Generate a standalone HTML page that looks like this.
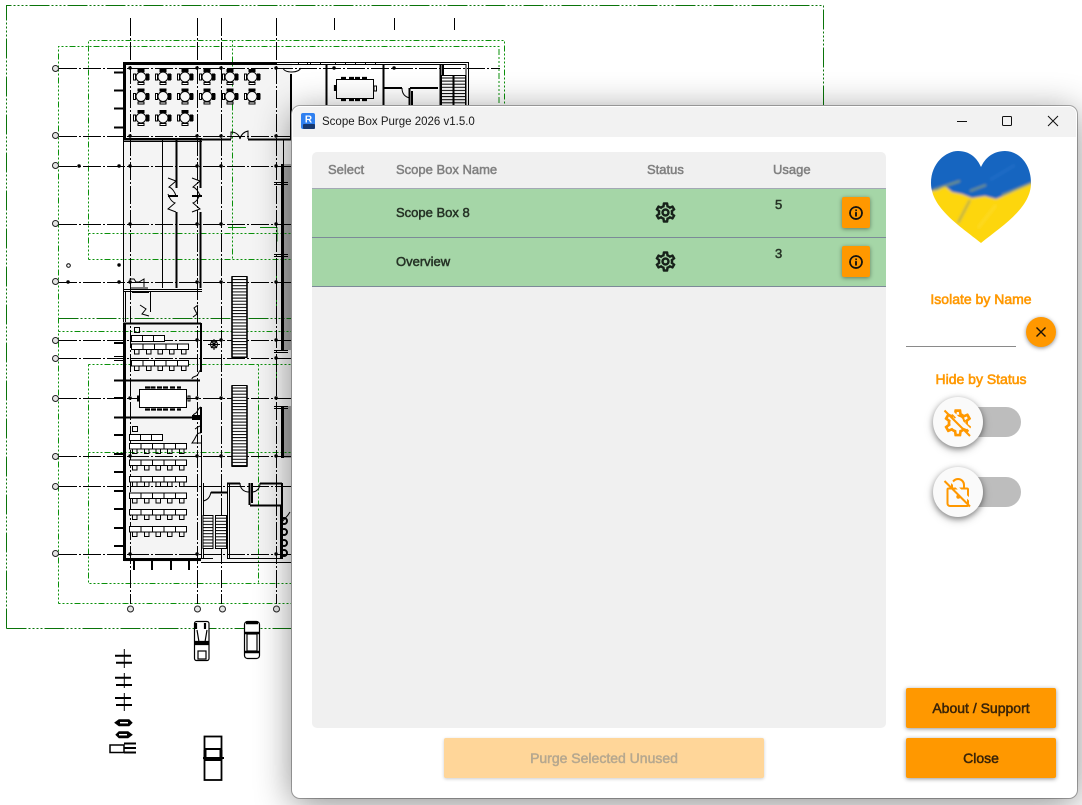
<!DOCTYPE html>
<html><head><meta charset="utf-8">
<style>
html,body{margin:0;padding:0;background:#fff}
body{width:1082px;height:805px;overflow:hidden;position:relative;font-family:"Liberation Sans",sans-serif}
.a{position:absolute;white-space:nowrap}
#cad{position:absolute;left:0;top:0}
#dlg{position:absolute;left:292px;top:106px;width:785px;height:692px;background:#fff;border-radius:8px;box-shadow:0 6px 36px rgba(0,0,0,.45),0 0 0 1px #b4b4b4;overflow:hidden}
#ov{position:absolute;left:0;top:0;width:1082px;height:805px}
.t{font-size:13px;line-height:16px;-webkit-text-stroke:.5px currentColor}
.h{color:#808080}
.r{color:#263326}
.o{color:#ff9800;font-size:14px;line-height:16px;text-align:center;-webkit-text-stroke:.6px #ff9800}
.btn{position:absolute;background:#ff9800;border-radius:2px;box-shadow:0 1px 4px rgba(0,0,0,.42);text-align:center;font-size:14px;line-height:40px;color:#3a2408;-webkit-text-stroke:.5px currentColor}
.ib{position:absolute;left:842px;width:28px;height:31px;background:#ff9800;border-radius:2px;box-shadow:0 1px 4px rgba(0,0,0,.42)}
.track{position:absolute;left:941px;width:80px;height:30px;border-radius:15px;background:#bdbdbd}
.thumb{position:absolute;left:933px;width:50px;height:50px;border-radius:25px;background:#fafafa;box-shadow:0 2px 6px rgba(0,0,0,.4),0 3px 10px rgba(0,0,0,.18)}
</style></head><body>
<svg id="cad" width="1082" height="805" viewBox="0 0 1082 805" xmlns="http://www.w3.org/2000/svg">
<defs>
<g id="ct" fill="none" stroke="#000" stroke-width="1">
<path d="M-3-7.500h6v2h-6zM-7.500-3h2v6h-2zM5.500-3h2v6h-2zM-3 5.500h6v2h-6z" fill="#fff"/>
<path d="M5.500-2.500h2.500v5h-2.500z" fill="#000"/>
<path d="M-2-7.500h4v1.500h-4z" fill="#000"/>
<circle cx="0" cy="0" r="5" fill="#f7f7f7"/>
</g>
<g id="rw" fill="none" stroke="#000" stroke-width="1">
<rect x=".5" y=".5" width="57" height="5.500" fill="#fff"/>
<path d="M12 .5v5.500M23.500 .5v5.500M35 .5v5.500M46.500 .5v5.500"/>
<path d="M3.500 6v4.500h4.500V6M15.500 6v4.500h4.500V6M27 6v4.500h4.500V6M38.500 6v4.500h4.500V6M50.500 6v4.500h4.500V6"/>
</g>
<pattern id="st" width="4" height="3.100" patternUnits="userSpaceOnUse"><rect width="4" height="3.100" fill="#fff"/><rect y="0" width="4" height="1" fill="#000"/></pattern>
</defs>

<!-- floors -->
<rect x="124" y="63" width="168" height="78" fill="#f4f4f4"/>
<rect x="124" y="140" width="168" height="422" fill="#f4f4f4"/>
<rect x="284" y="164" width="8" height="186" fill="#a9a9a9"/>
<rect x="284" y="406" width="8" height="52" fill="#a9a9a9"/>

<!-- green boxes -->
<g fill="none" stroke="#0a740a" stroke-width="1" shape-rendering="crispEdges" stroke-dasharray="20 2 2 2 2 2 2 2 2 2">
<path d="M6.5 628.500V5.500H823.500V106"/>
<path d="M6.5 628.500H292"/>
<path d="M58.500 318.500H292"/>
</g>
<g fill="none" stroke="#0a900a" stroke-width="1" shape-rendering="crispEdges" stroke-dasharray="2 2 2 2 2 2 2 2 6 2">
<path d="M58.500 603.500V46.500H499V106"/>
<path d="M58.500 603.500H292"/>
<path d="M88.500 259.500V40.500H504.500V106"/>
<path d="M88.500 233.500H292M88.500 259.500H292"/>
<path d="M232.500 40.500V259.500"/>
<path d="M58.500 331.500H292"/>
<path d="M88.500 364.500V583.500H292M88.500 364.500H292M88.500 452.500H292M258.500 364.500V583.500"/>
</g>
<g fill="none" stroke="#0a8a0a" stroke-width="1" shape-rendering="crispEdges">
<path d="M228 227.500h18M260 227.500h17v14"/>
<path d="M276.500 265v52M276.500 365v16"/>
</g>

<!-- grid lines -->
<g fill="none" stroke="#000" stroke-width="1" shape-rendering="crispEdges" stroke-dasharray="18 2 2 2">
<path d="M59 68.500H500M59 136.500H292M59 166.500H292M59 224.500H292M59 282.500H292M59 340.500H292M59 358.500H292M59 398.500H292M59 456.500H292M59 486.500H292M59 554.500H292"/>
<path d="M130.500 18V604M197.500 18V604M221.500 18V604M276.500 18V604"/>
<path d="M334.500 18V30M394.500 18V30M454.500 18V30"/>
</g>
<g fill="#e4e4e4" stroke="#222" stroke-width="1">
<circle cx="55.500" cy="68.500" r="3"/><circle cx="55.500" cy="135.500" r="3"/><circle cx="55.500" cy="165.500" r="3"/><circle cx="55.500" cy="223.500" r="3"/><circle cx="55.500" cy="281.500" r="3"/><circle cx="55.500" cy="340.500" r="3"/><circle cx="55.500" cy="358.500" r="3"/><circle cx="55.500" cy="398.500" r="3"/><circle cx="55.500" cy="456.500" r="3"/><circle cx="55.500" cy="486.500" r="3"/><circle cx="55.500" cy="553.500" r="3"/>
<circle cx="130.500" cy="609" r="3"/><circle cx="197.500" cy="609" r="3"/><circle cx="222.500" cy="609" r="3"/><circle cx="276.500" cy="609" r="3"/>
</g>
<!-- grid dots -->
<path fill="none" stroke="#000" stroke-width="3.400" stroke-linecap="round" d="M130 68h.1M197 68h.1M221 68h.1M276 68h.1M130 136h.1M197 136h.1M221 136h.1M276 136h.1M130 166h.1M197 166h.1M221 166h.1M276 166h.1M130 224h.1M197 224h.1M221 224h.1M276 224h.1M130 282h.1M197 282h.1M221 282h.1M276 282h.1M197 340h.1M221 340h.1M276 340h.1M276 358h.1M130 398h.1M197 398h.1M221 398h.1M276 398h.1M130 456h.1M197 456h.1M221 456h.1M276 456h.1M130 554h.1M197 554h.1M276 554h.1M79 166h.1M119 166h.1M119 265h.1M68 282h.1M119 282h.1M334 68h.1M394 68h.1"/>
<circle cx="68.500" cy="265.500" r="1.800" fill="none" stroke="#000"/>

<!-- tables -->
<use href="#ct" x="141" y="77"/><use href="#ct" x="163" y="77"/><use href="#ct" x="185" y="77"/><use href="#ct" x="207" y="77"/><use href="#ct" x="230" y="77"/><use href="#ct" x="252" y="77"/>
<use href="#ct" x="141" y="96.500"/><use href="#ct" x="163" y="96.500"/><use href="#ct" x="185" y="96.500"/><use href="#ct" x="207" y="96.500"/><use href="#ct" x="230" y="96.500"/><use href="#ct" x="252" y="96.500"/>
<use href="#ct" x="141" y="118"/><use href="#ct" x="163" y="118"/><use href="#ct" x="185" y="118"/>

<!-- thick walls -->
<g fill="none" stroke="#000" stroke-width="3" shape-rendering="crispEdges">
<path d="M124.500 63V139M123 63.500H277"/>
<path d="M114 72.500h10M114 90.500h10M114 108.500h10M114 127.500h10" stroke-width="2"/>
<path d="M176.500 140V188M176.500 212V288M200.500 140V188M200.500 212V288" stroke-width="2"/>
<path d="M168 196h10M192 196h10" stroke-width="2"/>
<path d="M124.500 323V558M123 559.500H201"/>
<path d="M282.500 164V350M282.500 406V458"/>
<path d="M114 380.500H200M114 417.500H198" stroke-width="2"/>
<path d="M114 343h10M114 398h10M114 435h10M114 454h10M114 472h10M114 491h10M114 509h10M114 528h10M114 546h10" stroke-width="2"/>
<path d="M134 560v10M152 560v10M171 560v10M189 560v10" stroke-width="2"/>
<path d="M123 323.500H201" stroke-width="2"/>
<path d="M192 417.500h9" stroke-width="5"/>
</g>
<!-- thin walls -->
<g fill="none" stroke="#000" stroke-width="1" shape-rendering="crispEdges">
<path d="M123.500 139v151M162.500 140V288M123 138.500H202M123 141.500H202M283.500 140v24"/>
<path d="M276 62.500H468.500V106M276 64.500H466V106M123 289.500H202M123 291.500H202M123.500 290V322M125.500 292V322"/>
<path d="M150.500 292v20M132 292.500h17"/>
<path d="M114 356.500h10M114 360.500h10"/>
<path d="M201.500 323V370M201.500 435V558M203.500 483V558M227.500 483V558M229.500 483V558"/>
<path d="M201 562.500H292M227 558.500H282M201 558.500H213"/>
<path d="M274 182.500h14M274 184.500h14M274 254.500h14M274 256.500h14M274 350.500h14M274 352.500h14M274 406.500h14M274 408.500h14"/>
<path d="M298.500 62v3M307.500 62v3M310.500 62v3M320.500 62v3M335.500 62v3M345.500 62v3M355.500 62v3M365.500 62v3M375.500 62v3"/>
</g>
<g fill="none" stroke="#000" stroke-width="1.800" shape-rendering="crispEdges">
<path d="M124 139.500H231M248 139.500H291M291 74V139"/>
<path d="M201 323V372M201 407V433"/>
<path d="M227 483.500H240M260 483.500H282M249.500 483V505M252 483V503M250 505.500H282M282 483V559M211 492.500H227"/>
<path d="M326.500 64V106M383.500 64V106M383 88H402M410 88H438M409.500 88V106M412 91V106M440.500 64V106M443 64V106"/>
</g>
<!-- doors -->
<g fill="none" stroke="#000" stroke-width="1">
<path d="M231 139V132c4 0 8 2 9 7 1-5 4-7 8-8v8"/>
<path d="M168 178l8 3-7 6c3 1 6 5 7 9M176 212l-8-3 7-6c-3-1-6-5-7-9"/>
<path d="M192 178l8 3-7 6c3 1 6 5 7 9M192 212l8-3-7-6c3-1 6-5 7-9"/>
<path d="M130 281v-2h4l2 3h3l5-3v8M131 288h17"/>
<path d="M140 305l6 4-4 5 7 2M198 305l-4 3 3 6-4 3"/>
<path d="M201 370c-3 1-2 5-5 6-2 1-4 1-4 3M201 407c-3 1-3 4-5 6-2 1-3 2-3 3M201 433c-4-1-5 4-7 7l-2 3h9M201 426c-3 0-4 2-6 3"/>
<path d="M211 492c-1 5-3 8-8 9M240 483c0 6 4 9 9 9M252 492c5 0 8-4 8-9M402 88c0 6 3 9 8 10M282 523c0-3 4-4 8-11"/>
<path d="M283 68c1 3 4 4 9 4 5 0 8-2 9-4"/>
</g>
<!-- meeting tables -->
<g fill="none" stroke="#000" stroke-width="1">
<rect x="139.500" y="389.500" width="47" height="18" fill="#fff"/>
<path d="M145 387.500h5M150.500 387.500h5M157 387.500h5M163 387.500h5M170 387.500h5M177 387.500h4M145 409.500h5M151 409.500h5M157 409.500h5M163 409.500h5M170 409.500h5M177 409.500h4" stroke-width="2.200"/>
<rect x="188" y="396" width="2" height="5"/>
<path d="M138 395.500v6" stroke-width="2"/>
<rect x="336.500" y="79.500" width="37" height="19" fill="#fff"/>
<path d="M341 78h5M349 78h5M355 78h5M362 78h5M341 100h5M349 100h5M355 100h5M362 100h5M335 85v6" stroke-width="2.200"/>
<rect x="374" y="86" width="2.500" height="5"/>
</g>
<!-- desks -->
<g fill="none" stroke="#000" stroke-width="1">
<rect x="134.500" y="327.500" width="5" height="5"/>
<rect x="131.500" y="335.500" width="33" height="6" fill="#fff"/><path d="M142.500 336v5M153.500 336v5"/>
<rect x="132.500" y="426.500" width="5" height="5"/>
<rect x="129.500" y="434.500" width="33" height="6" fill="#fff"/><path d="M140.500 435v5M151.500 435v5"/>
<path d="M214 339v11M208 344.500h12"/><circle cx="214" cy="344.500" r="3.500"/><path d="M211 341l6 7M217 341l-6 7"/>
</g>
<use href="#rw" x="131" y="343.500"/><use href="#rw" x="131" y="360"/>
<use href="#rw" x="129" y="443"/><use href="#rw" x="129" y="459.500"/><use href="#rw" x="129" y="476"/><use href="#rw" x="129" y="492.500"/><use href="#rw" x="129" y="509"/><use href="#rw" x="129" y="526"/>
<!-- stairs -->
<rect x="232" y="276.500" width="15" height="81" fill="url(#st)" stroke="#000" stroke-width="1"/>
<path d="M232 276.500v81M247 276.500v81" stroke="#000" stroke-width="1.600"/>
<rect x="232" y="385.500" width="15" height="81" fill="url(#st)" stroke="#000" stroke-width="1"/>
<path d="M232 385.500v81M247 385.500v81" stroke="#000" stroke-width="1.600"/>
<rect x="203" y="515.500" width="10" height="33" fill="url(#st)" stroke="#000"/><rect x="215.500" y="515.500" width="11" height="33" fill="url(#st)" stroke="#000"/>
<rect x="441.500" y="75.500" width="24" height="31" fill="url(#st)" stroke="#000"/><path d="M453.500 75v31" stroke="#000" stroke-width="2"/>
<!-- wall door circles -->
<g fill="none" stroke="#000" stroke-width="2">
<circle cx="284" cy="521" r="3"/><circle cx="284" cy="532" r="3"/><circle cx="284" cy="543" r="3"/><circle cx="284" cy="553" r="3"/>
<path d="M281 505v54"/>
</g>
<!-- vehicles -->
<g fill="#fff" stroke="#000" stroke-width="1.200">
<rect x="194.500" y="621.500" width="14.500" height="39" rx="2"/><path d="M196 623v6M205 623v6M195 642h14M195 644h14" stroke-width="2.200"/><rect x="198" y="651" width="8" height="8"/><path d="M197 630l2 12M207 630l-2 12"/>
<rect x="244.500" y="621.500" width="15" height="37" rx="3"/><rect x="247" y="634" width="10" height="17" fill="#fff"/><path d="M246 623h12M245 633l14 0M245 652h14" stroke-width="2.400"/>
<rect x="204.500" y="736.500" width="17" height="43.500" stroke-width="1.800"/><path d="M205 749h17M205 760h17M203 758h21" stroke-width="2"/><path d="M205 750v10M221 750v10" stroke-width="3"/>
</g>
<!-- scooters/bikes -->
<g fill="none" stroke="#000" stroke-width="2">
<path d="M115 655.700h16M116 662.700h16M115 677.700h16M116 685h16M115 698h16M116 705h16"/>
<path d="M124.300 649v19M124.300 673v15M124.300 693v18" stroke-width="1"/>
<path d="M115 722.700l4-3h10l3 3-3 3h-10z" fill="#000" stroke-width="1"/><path d="M120 722.700h8" stroke="#fff" stroke-width="1.500"/>
<path d="M116 734.700l3-3h9l4 3-4 3h-9z" fill="#000" stroke-width="1"/><path d="M119 734.700h8" stroke="#fff" stroke-width="1.500"/>
<rect x="110" y="745" width="14" height="7.500" stroke-width="1.500"/><path d="M124 743.500h12M124 748h12M124 752.500h12" stroke-width="2"/>
</g>
</svg>

<div id="dlg"></div>
<svg id="ov" width="1082" height="805" viewBox="0 0 1082 805" xmlns="http://www.w3.org/2000/svg" style="position:absolute;left:0;top:0">
<defs><clipPath id="hc"><path d="M981 243C960 226 931 208 931 183C931 163 946 151 958 151C970 151 977 158 981 167C985 158 993 151 1005 151C1018 151 1031 163 1031 183C1031 208 1002 226 981 243Z"/></clipPath>
<filter id="bl2" x="-5%" y="-5%" width="110%" height="110%"><feGaussianBlur stdDeviation="1.200"/></filter></defs>
<path d="M293 114a7 7 0 0 1 7-7H1069a7 7 0 0 1 7 7V137H293Z" fill="#f2f2f2"/>
<rect x="312" y="152" width="574" height="576" rx="5" fill="#f0f0f0"/>
<rect x="312" y="189" width="574" height="97" fill="#a5d6a7"/>
<path d="M312 188.500H886" stroke="#a3a8b4" stroke-width="1" shape-rendering="crispEdges"/>
<path d="M312 237.500H886M312 286.500H886" stroke="#7c8a98" stroke-width="1" shape-rendering="crispEdges"/>
<!-- revit logo -->
<path d="M303 113h10a2 2 0 0 1 2 2v12a2 2 0 0 1-2 2h-10a2 2 0 0 1-2-2v-12a2 2 0 0 1 2-2z" fill="#2f80f0"/>
<rect x="303" y="124" width="12" height="5" rx="1" fill="#17386f"/>
<text x="308.500" y="122.500" font-family="Liberation Sans" font-size="10" font-weight="bold" fill="#fff" text-anchor="middle">R</text>
<!-- window controls -->
<path d="M957 121.500H967" stroke="#111" stroke-width="1" shape-rendering="crispEdges"/>
<rect x="1002.500" y="116.500" width="9" height="9" rx="1" fill="none" stroke="#111"/>
<path d="M1048 116L1058 126M1058 116L1048 126" stroke="#111" stroke-width="1" fill="none"/>
<!-- gears -->
<g fill="#17211a" stroke="#17211a" stroke-width=".45">
<path id="gg" transform="translate(653.500 200.500)" d="M12,8A4,4 0 0,1 16,12A4,4 0 0,1 12,16A4,4 0 0,1 8,12A4,4 0 0,1 12,8M12,10A2,2 0 0,0 10,12A2,2 0 0,0 12,14A2,2 0 0,0 14,12A2,2 0 0,0 12,10M10,22C9.75,22 9.54,21.82 9.5,21.58L9.13,18.93C8.5,18.68 7.96,18.34 7.44,17.94L4.95,18.95C4.73,19.03 4.46,18.95 4.34,18.73L2.34,15.27C2.21,15.05 2.27,14.78 2.46,14.63L4.57,12.97L4.5,12L4.57,11L2.46,9.37C2.27,9.22 2.21,8.95 2.34,8.73L4.34,5.27C4.46,5.05 4.73,4.96 4.95,5.05L7.44,6.05C7.96,5.66 8.5,5.32 9.13,5.07L9.5,2.42C9.54,2.18 9.75,2 10,2H14C14.25,2 14.46,2.18 14.5,2.42L14.87,5.07C15.5,5.32 16.04,5.66 16.56,6.05L19.05,5.05C19.27,4.96 19.54,5.05 19.66,5.27L21.66,8.73C21.79,8.95 21.73,9.22 21.54,9.37L19.43,11L19.5,12L19.43,13L21.54,14.63C21.73,14.78 21.79,15.05 21.66,15.27L19.66,18.73C19.54,18.95 19.27,19.04 19.05,18.95L16.56,17.95C16.04,18.34 15.5,18.68 14.87,18.93L14.5,21.58C14.46,21.82 14.25,22 14,22H10M11.25,4L10.88,6.61C9.68,6.86 8.62,7.5 7.85,8.39L5.44,7.35L4.69,8.65L6.8,10.2C6.4,11.37 6.4,12.64 6.8,13.8L4.68,15.36L5.43,16.66L7.86,15.62C8.63,16.5 9.68,17.14 10.87,17.38L11.24,20H12.76L13.13,17.39C14.32,17.14 15.37,16.5 16.14,15.62L18.57,16.66L19.32,15.36L17.2,13.81C17.6,12.64 17.6,11.37 17.2,10.2L19.31,8.65L18.56,7.35L16.15,8.39C15.38,7.5 14.32,6.86 13.12,6.62L12.75,4H11.25Z"/>
<use href="#gg" y="49"/>
</g>
<!-- heart -->
<g clip-path="url(#hc)">
<g filter="url(#bl2)">
<rect x="925" y="148" width="112" height="100" fill="#1565c0"/>
<path d="M925 192L938 190L945 186L952 192L962 194L972 198L985 196L996 199L1010 193L1037 180V250H925Z" fill="#fdd60a"/>
<path d="M933 190L960 181M970 191L986 185M1002 195L1037 181" stroke="#8aa368" stroke-width="2" fill="none" opacity=".8"/>
<path d="M958 223L970 200" stroke="#b0aa52" stroke-width="2.500" opacity=".8"/>
<path d="M978 228L996 205" stroke="#ffe555" stroke-width="3" opacity=".3"/>
<path d="M990 180L1015 165" stroke="#2a74cc" stroke-width="4" opacity=".35"/>
</g>
</g>
<!-- orange X -->
<circle cx="1041" cy="332" r="15" fill="#ff9800" style="filter:drop-shadow(0 1px 2px rgba(0,0,0,.45))"/>
<path d="M1036.500 327.500L1045.500 336.500M1045.500 327.500L1036.500 336.500" stroke="#1a1208" stroke-width="1.400" fill="none"/>
<path d="M906 346.500H1016" stroke="#8a8a8a" stroke-width="1" shape-rendering="crispEdges"/>
</svg>

<div class="a" style="left:322px;top:114px;font-size:11.5px;line-height:16px;color:#1a1a1a">Scope Box Purge 2026 v1.5.0</div>
<div class="a t h" style="left:328px;top:162px">Select</div>
<div class="a t h" style="left:396px;top:162px">Scope Box Name</div>
<div class="a t h" style="left:647px;top:162px">Status</div>
<div class="a t h" style="left:773px;top:162px">Usage</div>
<div class="a t r" style="left:396px;top:205px">Scope Box 8</div>
<div class="a t r" style="left:396px;top:254px">Overview</div>
<div class="a t r" style="left:775px;top:197px">5</div>
<div class="a t r" style="left:775px;top:246px">3</div>
<div class="ib" style="top:197px"></div>
<div class="ib" style="top:246px"></div>
<svg class="a" style="left:848px;top:204.500px" width="16" height="16" viewBox="0 0 24 24"><path fill="#111" stroke="#111" stroke-width=".7" d="M11,9H13V7H11M12,20C7.59,20 4,16.41 4,12C4,7.59 7.59,4 12,4C16.41,4 20,7.59 20,12C20,16.41 16.41,20 12,20M12,2A10,10 0 0,0 2,12A10,10 0 0,0 12,22A10,10 0 0,0 22,12A10,10 0 0,0 12,2M11,17H13V11H11V17Z"/></svg>
<svg class="a" style="left:848px;top:253.500px" width="16" height="16" viewBox="0 0 24 24"><path fill="#111" stroke="#111" stroke-width=".7" d="M11,9H13V7H11M12,20C7.59,20 4,16.41 4,12C4,7.59 7.59,4 12,4C16.41,4 20,7.59 20,12C20,16.41 16.41,20 12,20M12,2A10,10 0 0,0 2,12A10,10 0 0,0 12,22A10,10 0 0,0 22,12A10,10 0 0,0 12,2M11,17H13V11H11V17Z"/></svg>

<div class="a o" style="left:906px;width:150px;top:291px">Isolate by Name</div>
<div class="a o" style="left:906px;width:150px;top:371px">Hide by Status</div>

<div class="track" style="top:407px"></div>
<div class="thumb" style="top:397px"></div>
<div class="track" style="top:477px"></div>
<div class="thumb" style="top:467px"></div>
<svg class="a" style="left:933px;top:397px" width="50" height="120" viewBox="933 397 50 120">
<g transform="translate(941.500 406.500) scale(1.36)"><path fill="#ff9800" d="M10,22C9.75,22 9.54,21.82 9.5,21.58L9.13,18.93C8.5,18.68 7.96,18.34 7.44,17.94L4.95,18.95C4.73,19.03 4.46,18.95 4.34,18.73L2.34,15.27C2.21,15.05 2.27,14.78 2.46,14.63L4.57,12.97L4.5,12L4.57,11L2.46,9.37C2.27,9.22 2.21,8.95 2.34,8.73L4.34,5.27C4.46,5.05 4.73,4.96 4.95,5.05L7.44,6.05C7.96,5.66 8.5,5.32 9.13,5.07L9.5,2.42C9.54,2.18 9.75,2 10,2H14C14.25,2 14.46,2.18 14.5,2.42L14.87,5.07C15.5,5.32 16.04,5.66 16.56,6.05L19.05,5.05C19.27,4.96 19.54,5.05 19.66,5.27L21.66,8.73C21.79,8.95 21.73,9.22 21.54,9.37L19.43,11L19.5,12L19.43,13L21.54,14.63C21.73,14.78 21.79,15.05 21.66,15.27L19.66,18.73C19.54,18.95 19.27,19.04 19.05,18.95L16.56,17.95C16.04,18.34 15.5,18.68 14.87,18.93L14.5,21.58C14.46,21.82 14.25,22 14,22H10M11.25,4L10.88,6.61C9.68,6.86 8.62,7.5 7.85,8.39L5.44,7.35L4.69,8.65L6.8,10.2C6.4,11.37 6.4,12.64 6.8,13.8L4.68,15.36L5.43,16.66L7.86,15.62C8.63,16.5 9.68,17.14 10.87,17.38L11.24,20H12.76L13.13,17.39C14.32,17.14 15.37,16.5 16.14,15.62L18.57,16.66L19.32,15.36L17.2,13.81C17.6,12.64 17.6,11.37 17.2,10.2L19.31,8.65L18.56,7.35L16.15,8.39C15.38,7.5 14.32,6.86 13.12,6.62L12.75,4H11.25Z"/></g>
<path d="M954 418a5.500 5.500 0 0 1 9 6.500" fill="none" stroke="#ff9800" stroke-width="2"/>
<path d="M946 409L972 435" stroke="#fafafa" stroke-width="2.400" transform="translate(1.600 -1.600)"/>
<path d="M944.500 410.500L970 436" stroke="#ff9800" stroke-width="2"/>
<path d="M947.500 489.500a1 1 0 0 1 1-1H967a1 1 0 0 1 1 1V505a1 1 0 0 1-1 1H950a2.500 2.500 0 0 1-2.500-2.500Z" fill="none" stroke="#ff9800" stroke-width="2"/>
<path d="M952 488V485a6 6 0 0 1 12 0V488" fill="none" stroke="#ff9800" stroke-width="2"/>
<circle cx="958.300" cy="496.700" r="2" fill="#ff9800"/>
<path d="M946 479.500L972 505" stroke="#fafafa" stroke-width="2.400" transform="translate(1.600 -1.600)"/>
<path d="M944.500 481L970 506.500" stroke="#ff9800" stroke-width="2"/>
</svg>

<div class="btn" style="left:444px;top:738px;width:320px;height:40px;background:#ffd699;color:#b6a88f;box-shadow:0 1px 3px rgba(0,0,0,.2)">Purge Selected Unused</div>
<div class="btn" style="left:906px;top:688px;width:150px;height:40px">About / Support</div>
<div class="btn" style="left:906px;top:738px;width:150px;height:40px">Close</div>
</body></html>
